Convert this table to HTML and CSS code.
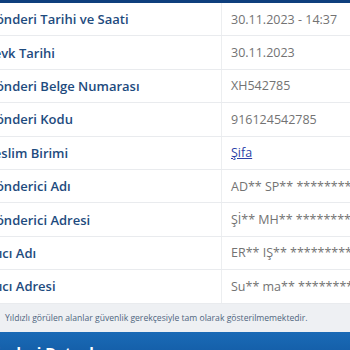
FILE: index.html
```html
<!DOCTYPE html>
<html lang="tr">
<head>
<meta charset="utf-8">
<link rel="stylesheet" href="styles.css">
</head>
<body>
<div class="wrap">
  <div class="table">
    <div class="row"><div class="label">Gönderi Tarihi ve Saati</div><div class="value">30.11.2023 - 14:37</div></div>
    <div class="row"><div class="label">Sevk Tarihi</div><div class="value">30.11.2023</div></div>
    <div class="row"><div class="label">Gönderi Belge Numarası</div><div class="value">XH542785</div></div>
    <div class="row"><div class="label">Gönderi Kodu</div><div class="value">916124542785</div></div>
    <div class="row"><div class="label">Teslim Birimi</div><div class="value"><a class="link" href="#">Şifa</a></div></div>
    <div class="row"><div class="label">Gönderici Adı</div><div class="value">AD** SP** ************</div></div>
    <div class="row"><div class="label">Gönderici Adresi</div><div class="value">Şİ** MH** ************</div></div>
    <div class="row"><div class="label">Alıcı Adı</div><div class="value">ER** IŞ** ************</div></div>
    <div class="row"><div class="label">Alıcı Adresi</div><div class="value">Su** ma** ************</div></div>
  </div>
  <div class="notice">Yıldızlı görülen alanlar güvenlik gerekçesiyle tam olarak gösterilmemektedir.</div>
  <div class="section">Gönderi Detayları</div>
</div>
</body>
</html>
```
FILE: styles.css
```css
html, body {
  margin: 0;
  padding: 0;
  background: #ffffff;
  overflow: hidden;
}
body {
  width: 350px;
  height: 350px;
  font-family: "Open Sans", "Noto Sans", sans-serif;
}
.wrap {
  margin-left: -13.5px;
  width: 520px;
}
.table {
  border-top: 3px solid #0e3f7d;
}
.row {
  display: flex;
  height: 32.4px;
  border-bottom: 1px solid #e9ebee;
}
.label {
  width: 235.5px;
  flex: none;
  display: flex;
  align-items: center;
  font-size: 13px;
  font-weight: 600;
  color: #1e4b7e;
  border-right: 1px solid #eceef0;
  box-sizing: border-box;
}
.value {
  display: flex;
  align-items: center;
  padding-left: 9px;
  font-size: 12.5px;
  color: #737373;
  white-space: nowrap;
}
.link {
  color: #2b3fa8;
  text-decoration: underline;
}
.notice {
  background: #eef0f3;
  height: 28px;
  display: flex;
  align-items: center;
  padding-left: 18.5px;
  font-size: 8.6px;
  color: #4f6680;
}
.section {
  background: linear-gradient(#1a6ab6, #0f549c);
  color: #ffffff;
  font-weight: 700;
  font-size: 15px;
  height: 40px;
  padding-top: 10px;
  box-sizing: border-box;
  text-indent: -5px;
}
```
